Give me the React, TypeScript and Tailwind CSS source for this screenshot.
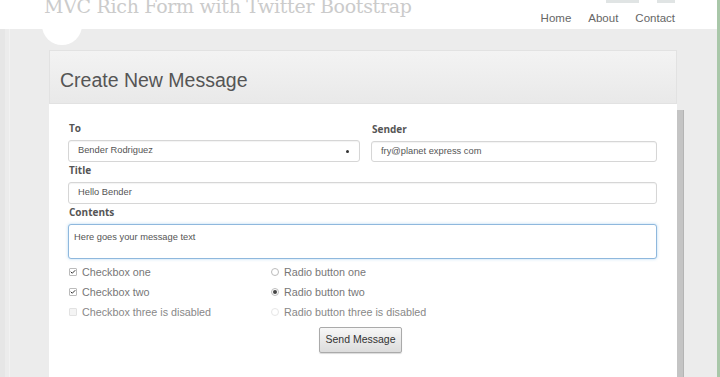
import { Check } from 'lucide-react';

const CHECKS = [
  { label: 'Checkbox one', checked: true, disabled: false },
  { label: 'Checkbox two', checked: true, disabled: false },
  { label: 'Checkbox three is disabled', checked: false, disabled: true },
];

const RADIOS = [
  { label: 'Radio button one', checked: false, disabled: false },
  { label: 'Radio button two', checked: true, disabled: false },
  { label: 'Radio button three is disabled', checked: false, disabled: true },
];

function Label({ children }: { children: string }) {
  return (
    <div className="h-[12px] pl-[1px] flex items-center text-[10px] font-bold text-[#555] font-['Open_Sans',sans-serif]">
      {children}
    </div>
  );
}

function Field({ value, select, h = 'h-[22px]' }: { value: string; select?: boolean; h?: string }) {
  return (
    <div
      className={`${h} flex items-center justify-between px-[9px] border border-[#d6d6d6] rounded-[3px] bg-white text-[9.3px] text-[#555] shadow-[inset_0_1px_1px_rgba(0,0,0,0.05)]`}
    >
      <span>{value}</span>
      {select && <span className="w-[3px] h-[3px] rounded-full bg-[#333] mr-[1px]" />}
    </div>
  );
}

export default function App() {
  return (
    <div className="relative w-[720px] h-[377px] overflow-hidden bg-white border-r-[3px] border-[#a9c7a9] flex flex-col font-['Liberation_Sans',Arial,sans-serif]">
      {/* white tab circle peeking over the gray band */}
      <div className="absolute left-[42px] top-[5px] w-[40px] h-[40px] rounded-full bg-white" />

      {/* Top header: title runs off the top edge */}
      <header className="relative z-10 h-[29px] shrink-0 flex justify-between pl-[44px] pr-[42px]">
        <div className="-mt-[5px] text-[19px] leading-[22px] text-[#cbcbcb] font-['DejaVu_Serif',serif] tracking-[-0.3px]">
          MVC Rich Form with Twitter Bootstrap
        </div>
        <div className="flex flex-col items-end">
          <div className="flex gap-[18px] h-[3px]">
            <span className="w-[33px] bg-[#e0e4e4]" />
            <span className="w-[18px] bg-[#e0e4e4]" />
          </div>
          <nav className="mt-[7px] flex gap-[17px] text-[11.5px] text-[#666]">
            <span>Home</span>
            <span>About</span>
            <span>Contact</span>
          </nav>
        </div>
      </header>

      <main className="flex-1 bg-[#ececec] flex border-l-[5px] border-[#e6e6e6]">
        <div className="w-[5px] border-r border-[#f2f2f2]" />
        <div className="relative z-10 ml-[39px] mt-[21px] w-[628px] flex flex-col">
          <div className="h-[54px] flex items-center pl-[10px] pt-[7px] border border-[#e2e2e2] bg-gradient-to-b from-[#f3f3f3] to-[#e9e9e9] text-[19.5px] text-[#555]">
            Create New Message
          </div>
          <div className="flex-1 bg-white pl-[19px] pr-[20px] pt-[18px]">
            <div className="grid grid-cols-[292px_1fr] gap-x-[11px]">
              <div className="flex flex-col gap-[6px]">
                <Label>To</Label>
                <Field value="Bender Rodriguez" select />
              </div>
              <div className="flex flex-col gap-[6px] pt-[1px]">
                <Label>Sender</Label>
                <Field value="fry@planet express com" h="h-[21px]" />
              </div>
            </div>
            <div className="mt-[2px] flex flex-col gap-[6px]">
              <Label>Title</Label>
              <Field value="Hello Bender" />
            </div>
            <div className="mt-[2px] flex flex-col gap-[6px]">
              <Label>Contents</Label>
              <div className="h-[35px] px-[5px] pt-[6px] border border-[#8fb8dd] rounded-[3px] bg-white text-[9.3px] text-[#555] shadow-[0_0_3px_rgba(102,175,233,0.5)]">
                Here goes your message text
              </div>
            </div>

            <div className="mt-[3px] grid grid-cols-[202px_1fr] pl-[1px]">
              <div className="flex flex-col">
                {CHECKS.map((c) => (
                  <div key={c.label} className="h-[20px] flex items-center gap-[5px] text-[10.75px] text-[#777]">
                    <span
                      className={`w-[8px] h-[8px] rounded-[1px] border flex items-center justify-center ${
                        c.disabled ? 'border-[#e2e2e2] bg-[#f4f4f4]' : 'border-[#bbb] bg-white'
                      }`}
                    >
                      {c.checked && <Check className="w-[8px] h-[8px] text-[#333]" strokeWidth={4} />}
                    </span>
                    <span className={c.disabled ? 'text-[#888]' : ''}>{c.label}</span>
                  </div>
                ))}
              </div>
              <div className="flex flex-col">
                {RADIOS.map((r) => (
                  <div key={r.label} className="h-[20px] flex items-center gap-[5px] text-[10.75px] text-[#777]">
                    <span
                      className={`w-[8px] h-[8px] rounded-full border flex items-center justify-center ${
                        r.disabled ? 'border-[#e6e6e6]' : 'border-[#bbb]'
                      } bg-white`}
                    >
                      {r.checked && <span className="w-[4px] h-[4px] rounded-full bg-[#444]" />}
                    </span>
                    <span className={r.disabled ? 'text-[#888]' : ''}>{r.label}</span>
                  </div>
                ))}
              </div>
            </div>

            <div className="mt-[5px] flex justify-center pr-[4px]">
              <button className="h-[26px] px-[5px] border border-[#aaa] rounded-[2px] bg-gradient-to-b from-[#f7f7f7] to-[#dcdcdc] text-[10.5px] text-[#333] shadow-[0_1px_1px_rgba(0,0,0,0.15)]">
                Send Message
              </button>
            </div>
          </div>
        </div>
        <div className="mt-[81px] w-[7px] bg-[#c4c4c4] border-r border-[#b4b4b4]" />
      </main>
    </div>
  );
}
